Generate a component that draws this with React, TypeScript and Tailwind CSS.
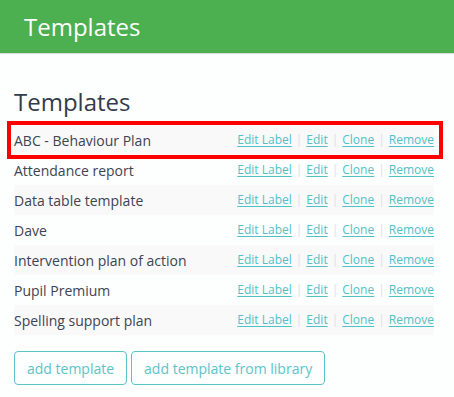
import React from 'react';

const templates = [
  'ABC - Behaviour Plan',
  'Attendance report',
  'Data table template',
  'Dave',
  'Intervention plan of action',
  'Pupil Premium',
  'Spelling support plan',
];

const actions = ['Edit Label', 'Edit', 'Clone', 'Remove'];

const App: React.FC = () => {
  return (
    <div className="min-h-[397px] w-[454px] bg-[#fdfefe] text-[#3b4252]" style={{ fontFamily: '"Open Sans", sans-serif' }}>
      {/* top bar */}
      <div className="h-[54px] bg-[#4caf50] border-b border-[#dcdcdc] flex items-center px-[24px]">
        <h1 className="text-[24px] text-white leading-none">Templates</h1>
      </div>

      <div className="px-[14px] pt-[36px]">
        <h2 className="text-[24px] leading-none text-[#333c4a] mb-[11px]">Templates</h2>

        <div className="w-[420px]">
          {templates.map((name, i) => (
            <div
              key={name}
              className={
                'relative h-[30px] flex items-center justify-between text-[14px] ' +
                (i % 2 === 0 ? 'bg-[#f9f9f9]' : '')
              }
            >
              {i === 0 && (
                <div className="absolute left-[-7px] top-[-4px] w-[436px] h-[38px] border-[4px] border-[#ff0000]" />
              )}
              <span className="text-[#3d4452]">{name}</span>
              <div className="flex items-center text-[12px] text-[#52c1c6]">
                {actions.map((a, j) => (
                  <React.Fragment key={a}>
                    {j > 0 && <span className="text-[#e0e0e6] px-[4px]">|</span>}
                    <a href="#" className="underline underline-offset-2">{a}</a>
                  </React.Fragment>
                ))}
              </div>
            </div>
          ))}
        </div>

        <div className="flex gap-[4px] mt-[16px]">
          <button className="h-[34px] px-[12px] border border-[#5bc4c6] rounded-[4px] text-[14px] text-[#5cc4c8]">
            add template
          </button>
          <button className="h-[34px] px-[12px] border border-[#5bc4c6] rounded-[4px] text-[14px] text-[#5cc4c8]">
            add template from library
          </button>
        </div>
      </div>
    </div>
  );
};

export default App;
